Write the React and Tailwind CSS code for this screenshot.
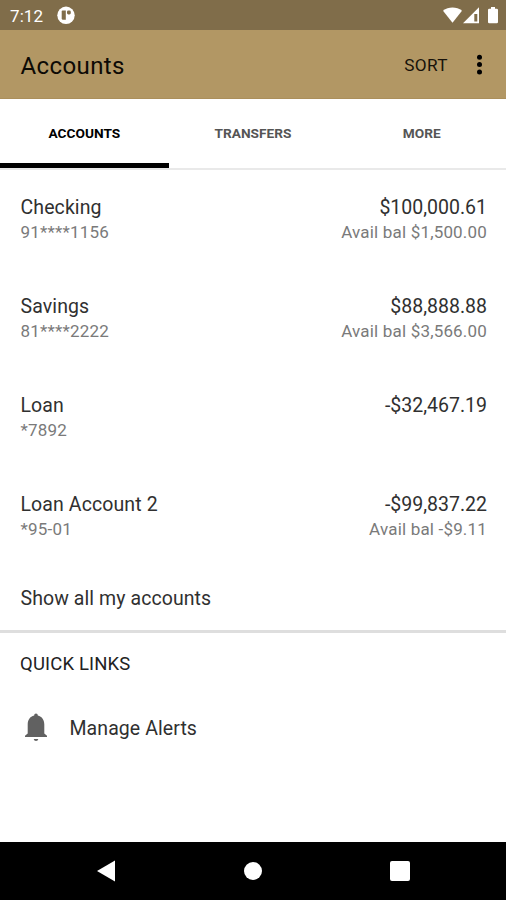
const accounts = [
  { name: 'Checking', number: '91****1156', balance: '$100,000.61', available: 'Avail bal $1,500.00' },
  { name: 'Savings', number: '81****2222', balance: '$88,888.88', available: 'Avail bal $3,566.00' },
  { name: 'Loan', number: '*7892', balance: '-$32,467.19' },
  { name: 'Loan Account 2', number: '*95-01', balance: '-$99,837.22', available: 'Avail bal -$9.11' },
];

const tabs = ['ACCOUNTS', 'TRANSFERS', 'MORE'];

function StatusBar() {
  return (
    <div className="h-[30px] shrink-0 bg-[#806d4a] flex items-center justify-between pl-[10px] pr-[7px] text-white">
      <div className="flex items-center gap-[14px]">
        <span className="text-[17px] leading-[30px] tracking-[0.1px] pt-px">7:12</span>
        <svg className="w-[18px] h-[18px]" viewBox="0 0 18 18">
          <circle cx="9" cy="9.300" r="8.700" fill="#fff" />
          <path d="M5.500 4.500H8.800V13.800H6Q4.700 13.800 4.700 12.500V5.500Q4.700 4.500 5.500 4.500Z" fill="#806d4a" />
          <rect x="10" y="4.500" width="3.800" height="4" rx="1.400" fill="#806d4a" />
        </svg>
      </div>
      <svg className="w-[56px] h-[18px]" viewBox="0 0 56 18" fill="#fff">
        <path d="M0 4.700C5.500 .4 13.500 .4 19 4.700L9.500 16.800Z" />
        <path fillRule="evenodd" d="M20 17.300L36 1.300V17.300ZM31.300 8V15.500H34.300V8Z" />
        <path d="M46.300 2.800H48V1H52V2.800H53.700Q55 2.800 55 4V16Q55 17.300 53.700 17.300H46.300Q45 17.300 45 16V4Q45 2.800 46.300 2.800Z" />
      </svg>
    </div>
  );
}

function AppBar() {
  return (
    <header className="h-[69px] shrink-0 bg-[#b29764] flex items-center pl-[20.500px] pr-[21px] pt-[2px] text-[#17120a] border-b border-[#ab8f5b]">
      <h1 className="flex-1 text-[24px] leading-[30px] tracking-[0.400px] pt-px text-[#0d0a05]">Accounts</h1>
      <button className="text-[17.200px] leading-[24px] tracking-[0.400px] mr-[26px]">SORT</button>
      <svg className="w-[11px] h-[22px]" viewBox="0 0 11 22">
        <circle cx="5.500" cy="3.200" r="2.500" />
        <circle cx="5.500" cy="10.600" r="2.500" />
        <circle cx="5.500" cy="18" r="2.500" />
      </svg>
    </header>
  );
}

function Tabs({ active }) {
  return (
    <nav className="h-[71px] shrink-0 grid grid-cols-3 border-b-2 border-[#e9e9e9]">
      {tabs.map((tab) => (
        <button
          key={tab}
          className={`h-[69px] pt-[5px] text-[13.700px] font-bold border-b-[5px] ${
            tab === active ? 'text-black border-black' : 'text-[#555] border-transparent'
          }`}
        >
          {tab}
        </button>
      ))}
    </nav>
  );
}

function AccountRow({ account }) {
  return (
    <li className="h-[99px] pt-[25px] flex justify-between">
      <div>
        <p className="text-[19.500px] leading-[25px] text-[#303030] tracking-[0.100px]">{account.name}</p>
        <p className="text-[17px] leading-[24px] text-[#7a7a7a] tracking-[0.200px]">{account.number}</p>
      </div>
      <div className="text-right">
        <p className="text-[19.500px] leading-[25px] text-[#303030]">{account.balance}</p>
        {account.available && (
          <p className="text-[17px] leading-[24px] text-[#7a7a7a] tracking-[0.180px]">{account.available}</p>
        )}
      </div>
    </li>
  );
}

function NavigationBar() {
  return (
    <div className="h-[58px] shrink-0 bg-black flex items-center justify-between px-[96px]">
      <svg className="w-[20px] h-[22px]" viewBox="0 0 20 22">
        <path d="M1 11L19 .5V21.500Z" fill="#fff" />
      </svg>
      <div className="w-[18px] h-[18px] rounded-full bg-white" />
      <div className="w-[20px] h-[20px] rounded-[2px] bg-white" />
    </div>
  );
}

export default function App() {
  return (
    <div className="w-[506px] h-[900px] flex flex-col bg-white overflow-hidden font-['Roboto',sans-serif]">
      <StatusBar />
      <AppBar />
      <Tabs active="ACCOUNTS" />
      <main className="flex-1 flex flex-col">
        <ul className="pl-[20.500px] pr-[19px]">
          {accounts.map((account) => (
            <AccountRow key={account.name} account={account} />
          ))}
        </ul>
        <button className="h-[64px] pl-[20.500px] pt-px text-left text-[19.500px] text-[#303030] tracking-[0.080px]">
          Show all my accounts
        </button>
        <section className="border-t-[3px] border-[#dedede]">
          <h2 className="h-[61px] px-[20px] pt-[2px] flex items-center text-[18.500px] tracking-[0.150px] text-[#222]">QUICK LINKS</h2>
          <button className="h-[68px] pl-[20.500px] flex items-center gap-[19px] text-[19.500px] text-[#303030] tracking-[0.080px]">
            <svg className="w-[30px] h-[34px]" viewBox="0 0 30 34" fill="#616161">
              <path d="M15 2.500C13.900 2.500 13.200 3.300 13.200 4.600C8.900 5.700 6.700 9 6.700 13.500V22.500L4 24.700V26H26V24.700L23.300 22.500V13.500C23.300 9 21.100 5.700 16.800 4.600C16.800 3.300 16.100 2.500 15 2.500Z" />
              <path d="M12.700 28H17.300Q17 30 15 30T12.700 28Z" />
            </svg>
            <span className="pt-[2px]">Manage Alerts</span>
          </button>
        </section>
      </main>
      <NavigationBar />
    </div>
  );
}
